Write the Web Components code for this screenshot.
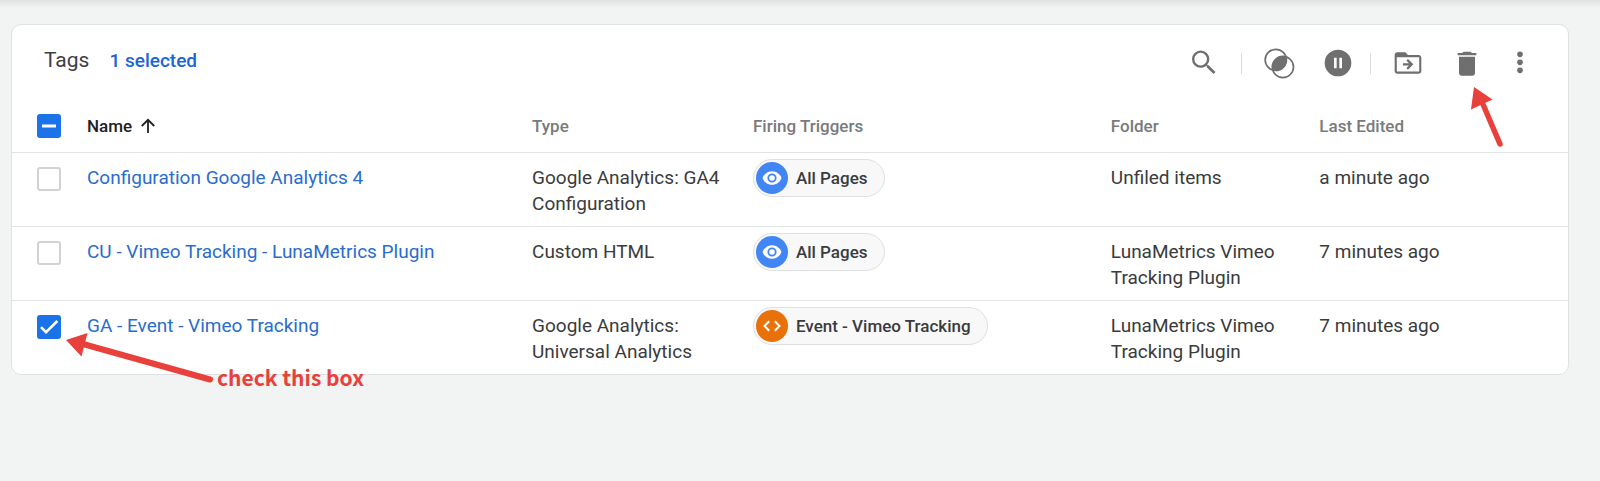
<!DOCTYPE html>
<html lang="en">
<head>
<meta charset="utf-8">
<meta name="viewport" content="width=device-width, initial-scale=1">
<title>Tags</title>
<style>
  body {
    margin: 0;
    min-height: 100vh;
    background: linear-gradient(#dfe1e2, #f2f3f3 8px) no-repeat #f2f3f3;
    font-family: Roboto, "Liberation Sans", sans-serif;
    color: #3a3b3d;
  }
</style>
</head>
<body>
<tag-manager></tag-manager>

<template id="manager-tpl">
  <style>
    :host { display: block; padding: 24px 31px 24px 11px; }
    section { background: #fff; border: 1px solid #e0e1e2; border-radius: 10px; }
  </style>
  <section aria-label="Tags">
    <tag-toolbar>
      <span slot="title">Tags</span>
      <a slot="count" href="#selected">1 selected</a>
    </tag-toolbar>
    <tag-table></tag-table>
  </section>
</template>

<template id="toolbar-tpl">
  <style>
    :host { display: flex; align-items: center; height: 76px; padding: 0 32px; }
    h1 { margin: 0; font: 400 21px/26px Roboto, sans-serif; color: #3c4043; }
    .title { display: flex; align-items: baseline; gap: 20px; flex: 1; padding-bottom: 6px; }
    ::slotted(a) { color: #1a66d6; text-decoration: none; font: 500 19px/26px Roboto, sans-serif; }
    .actions { display: flex; align-items: center; }
    .group { display: flex; gap: 27px; }
    .rule { width: 1px; height: 21px; background: #dadce0; margin: 0 21px; }
    .rule.near { margin-left: 16px; }
    .more { margin-left: 21px; }
    .spot { position: relative; display: flex; }
    .spot arrow-note { position: absolute; left: 16px; top: 38px; }
  </style>
  <div class="title"><h1><slot name="title"></slot></h1><slot name="count"></slot></div>
  <div class="actions" role="toolbar" aria-label="Tag actions">
    <icon-button label="Search"><svg viewBox="0 0 24 24"><path d="M15.5 13.600h-.79l-.28-.27A6.47 6.47 0 0 0 16 9.100A6.5 6.5 0 1 0 9.500 15.600c1.610 0 3.090-.59 4.230-1.570l.27.28v.79l5.200 5.100L20.600 18.800zm-6 .2a4.700 4.700 0 1 1 0-9.400a4.700 4.700 0 0 1 0 9.400"/></svg></icon-button>
    <span class="rule"></span>
    <div class="group">
      <icon-button label="Compare"><svg viewBox="0 0 32 32"><g fill="none" stroke="currentColor" stroke-width="1.700"><circle cx="12.800" cy="12.900" r="10.600"/><circle cx="19.900" cy="20" r="10.600"/></g><path d="M23.100 9.700A10.700 10.700 0 0 1 9.700 23.100A10.700 10.700 0 0 1 23.100 9.700"/></svg></icon-button>
      <icon-button label="Pause"><svg viewBox="0 0 24 24"><path d="M12 2a10 10 0 1 0 0 20a10 10 0 0 0 0-20M11 16H9V8h2zm4 0h-2V8h2z"/></svg></icon-button>
    </div>
    <span class="rule near"></span>
    <div class="group">
      <icon-button label="Move to folder"><svg viewBox="0 0 24 24"><path d="M20 6h-8l-2-2H4c-1.100 0-2 .9-2 2v12c0 1.100.9 2 2 2h16c1.100 0 2-.9 2-2V8c0-1.100-.9-2-2-2m.4 12.300H3.600V7.700H20.400zm-8.400-1.300l4-4l-4-4l-1.200 1.200l1.900 1.900H8.200v1.800h4.500l-1.900 1.900z"/></svg></icon-button>
      <div class="spot">
        <icon-button label="Delete"><svg viewBox="0 0 24 24"><path d="M6 19.500c0 1.100.9 2 2 2h8c1.100 0 2-.9 2-2V7.300H6zM19 4.500h-3.300l-1.200-1h-5l-1.200 1H5v1.600h14z"/></svg></icon-button>
        <arrow-note shape="up"></arrow-note>
      </div>
    </div>
    <icon-button class="more" label="More"><svg viewBox="0 0 24 24"><circle cx="12" cy="5.500" r="2.100"/><circle cx="12" cy="11.500" r="2.100"/><circle cx="12" cy="17.500" r="2.100"/></svg></icon-button>
  </div>
</template>

<template id="icon-tpl">
  <style>
    :host { display: block; }
    button { display: block; width: 32px; height: 32px; padding: 0; border: 0; background: none; color: #6f6f6f; cursor: pointer; }
    ::slotted(svg) { display: block; width: 32px; height: 32px; fill: currentColor; }
  </style>
  <button type="button"><slot></slot></button>
</template>

<template id="check-tpl">
  <style>
    :host { display: grid; width: 24px; height: 24px; }
    input, svg { grid-area: 1 / 1; width: 24px; height: 24px; margin: 0; }
    input { appearance: none; border: 2px solid #d2d2d2; border-radius: 3px; background: #fff; }
    input:checked, input:indeterminate { background: #1a73e8; border-color: #1a73e8; }
    svg { display: none; pointer-events: none; fill: none; stroke: #fff; }
    input:checked ~ .tick, input:indeterminate ~ .dash { display: block; }
  </style>
  <input type="checkbox">
  <svg class="tick" viewBox="0 0 24 24" stroke-width="2.600"><path d="M4 12.200l5 5L20.300 6"/></svg>
  <svg class="dash" viewBox="0 0 24 24" stroke-width="3"><path d="M5 12h14"/></svg>
</template>

<template id="chip-tpl">
  <style>
    :host { display: inline-flex; align-items: center; gap: 8px; height: 32px; padding: 2px 16px 2px 2px;
      border: 1px solid #dfe0e1; border-radius: 19px; background: #f8f8f8; font-size: 17px; font-weight: 500; line-height: 32px; color: #3a3b3d; white-space: nowrap; }
    svg { display: block; width: 32px; height: 32px; }
    .code { display: none; }
    :host([kind="event"]) .code { display: block; }
    :host([kind="event"]) .eye { display: none; }
  </style>
  <svg class="eye" viewBox="0 0 32 32"><circle cx="16" cy="16" r="16" fill="#4285f4"/><path d="M6.500 16C8 12 11.600 9.200 16 9.200S24 12 25.500 16C24 20 20.400 22.800 16 22.800S8 20 6.500 16" fill="#fff"/><circle cx="16" cy="16" r="3.700" fill="#fff" stroke="#4285f4" stroke-width="1.800"/></svg>
  <svg class="code" viewBox="0 0 32 32"><circle cx="16" cy="16" r="16" fill="#e8710a"/><path d="M13.200 11.200L8.500 16l4.700 4.800M18.800 11.200l4.700 4.800l-4.700 4.800" fill="none" stroke="#fff" stroke-width="2"/></svg>
  <slot></slot>
</template>

<template id="arrow-tpl">
  <style>
    :host { display: block; pointer-events: none; color: #e8403a; }
    svg { display: none; fill: currentColor; stroke: currentColor; overflow: visible; }
    :host([shape="up"]) .up, :host([shape="left"]) .left { display: block; }
    .text { display: flex; align-items: flex-end; gap: 2px; font: 700 21px/24px "Noto Sans CJK SC", "Open Sans", sans-serif; white-space: nowrap; }
  </style>
  <div class="text">
    <svg class="up" width="36" height="64" viewBox="0 0 36 64"><path d="M7 2L25.500 14.500L4 24.500z" stroke="none"/><path d="M15 17L33 59" stroke-width="5.500" stroke-linecap="round"/></svg>
    <svg class="left" width="150" height="56" viewBox="0 0 150 56"><path d="M1 7L22.500 0L16.500 23.500z" stroke="none"/><path d="M18 11L145 46.500" stroke-width="6" stroke-linecap="round"/></svg>
    <slot></slot>
  </div>
</template>

<template id="table-tpl">
  <style>
    :host { display: block; }
    table { width: 100%; border-collapse: separate; border-spacing: 0; table-layout: fixed; }
    .c-check { width: 75px; } .c-name { width: 445px; } .c-type { width: 14%; } .c-trig { width: 23%; } .c-folder { width: 13.400%; }
    .c-name { width: 28.600%; }
    .c-type { width: 14.200%; }
    th { height: 49px; padding: 0 0 2px; text-align: left; font-size: 17px; font-weight: 500; color: #7a7a7a; }
    th.sorted { color: #202124; }
    th button { display: flex; align-items: center; gap: 8px; padding: 0; border: 0; background: none; font: inherit; color: inherit; }
    th svg { width: 16px; height: 16px; fill: none; stroke: currentColor; stroke-width: 1.800; }
    td { height: 52px; padding: 12px 16px 9px 0; vertical-align: top; font-size: 19px; line-height: 26px; border-top: 1px solid #e2e3e4; }
    td:first-child { position: relative; padding: 14px 0 0 25px; }
    th:first-child { padding-left: 25px; }
    td.chip { padding: 6px 0 0; line-height: 0; }
    a { color: #2a6dce; text-decoration: none; }
    arrow-note { position: absolute; left: 53px; top: 32px; }
  </style>
  <table>
    <colgroup><col class="c-check"><col class="c-name"><col class="c-type"><col class="c-trig"><col class="c-folder"><col></colgroup>
    <thead><tr>
      <th><check-box label="Select all tags" state="mixed"></check-box></th>
      <th class="sorted" aria-sort="ascending"><button type="button">Name<svg viewBox="0 0 16 16" aria-hidden="true"><path d="M8 15V2M1.800 8L8 1.800L14.200 8"/></svg></button></th>
      <th>Type</th><th>Firing Triggers</th><th>Folder</th><th>Last Edited</th>
    </tr></thead>
    <tbody>
      <tr>
        <td><check-box label="Configuration Google Analytics 4"></check-box></td>
        <td><a href="#ga4">Configuration Google Analytics 4</a></td>
        <td>Google Analytics: GA4 Configuration</td>
        <td class="chip"><trigger-chip>All Pages</trigger-chip></td>
        <td>Unfiled items</td><td>a minute ago</td>
      </tr>
      <tr>
        <td><check-box label="CU - Vimeo Tracking - LunaMetrics Plugin"></check-box></td>
        <td><a href="#cu">CU - Vimeo Tracking - LunaMetrics Plugin</a></td>
        <td>Custom HTML</td>
        <td class="chip"><trigger-chip>All Pages</trigger-chip></td>
        <td>LunaMetrics Vimeo Tracking Plugin</td><td>7 minutes ago</td>
      </tr>
      <tr>
        <td><check-box label="GA - Event - Vimeo Tracking" state="on"></check-box><arrow-note shape="left">check this box</arrow-note></td>
        <td><a href="#ga">GA - Event - Vimeo Tracking</a></td>
        <td>Google Analytics: Universal Analytics</td>
        <td class="chip"><trigger-chip kind="event">Event - Vimeo Tracking</trigger-chip></td>
        <td>LunaMetrics Vimeo Tracking Plugin</td><td>7 minutes ago</td>
      </tr>
    </tbody>
  </table>
</template>

<script>
  class BaseElement extends HTMLElement {
    constructor() {
      super();
      const tpl = document.getElementById(this.constructor.template);
      this.attachShadow({ mode: "open" }).append(tpl.content.cloneNode(true));
    }
  }
  class IconButton extends BaseElement {
    static template = "icon-tpl";
    connectedCallback() {
      this.shadowRoot.querySelector("button").setAttribute("aria-label", this.getAttribute("label"));
    }
  }
  class CheckBox extends BaseElement {
    static template = "check-tpl";
    connectedCallback() {
      const input = this.shadowRoot.querySelector("input");
      input.setAttribute("aria-label", this.getAttribute("label"));
      input.checked = this.getAttribute("state") === "on";
      input.indeterminate = this.getAttribute("state") === "mixed";
    }
  }
  class TriggerChip extends BaseElement { static template = "chip-tpl"; }
  class ArrowNote extends BaseElement { static template = "arrow-tpl"; }
  class TagToolbar extends BaseElement { static template = "toolbar-tpl"; }
  class TagTable extends BaseElement { static template = "table-tpl"; }
  class TagManager extends BaseElement { static template = "manager-tpl"; }

  customElements.define("icon-button", IconButton);
  customElements.define("check-box", CheckBox);
  customElements.define("trigger-chip", TriggerChip);
  customElements.define("arrow-note", ArrowNote);
  customElements.define("tag-toolbar", TagToolbar);
  customElements.define("tag-table", TagTable);
  customElements.define("tag-manager", TagManager);
</script>
</body>
</html>
